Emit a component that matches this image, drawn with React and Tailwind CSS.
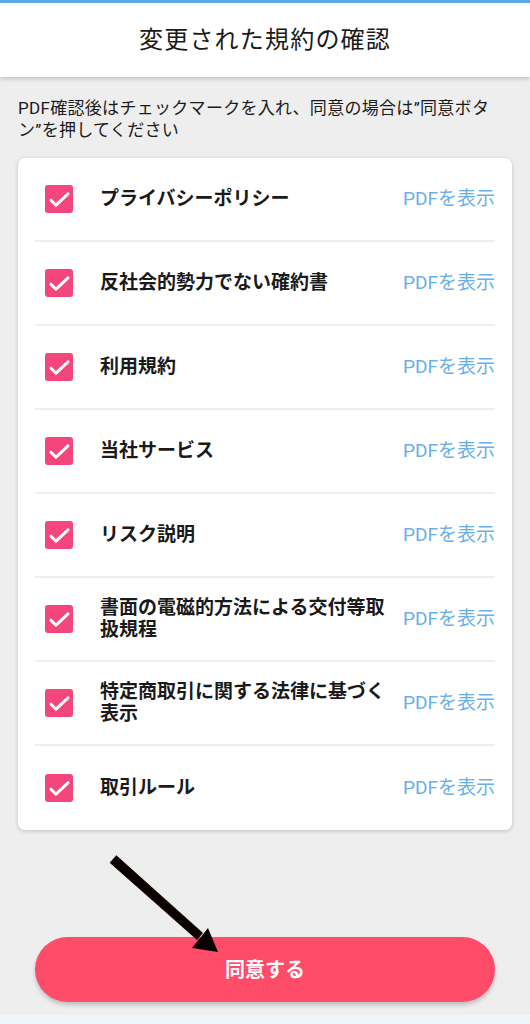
import React from 'react';

const terms = [
  'プライバシーポリシー',
  '反社会的勢力でない確約書',
  '利用規約',
  '当社サービス',
  'リスク説明',
  '書面の電磁的方法による交付等取扱規程',
  '特定商取引に関する法律に基づく表示',
  '取引ルール',
];

const font = { fontFamily: 'Roboto, "Noto Sans CJK JP", "Noto Sans", sans-serif' };

const CheckBox = () => (
  <div className="w-[28px] h-[28px] rounded-[3px] bg-[#f2467c] shrink-0">
    <svg width="28" height="28" viewBox="0 0 28 28" fill="none">
      <path d="M6 15.2 L11 20.2 L23 8.8" stroke="#ffffff" strokeWidth="3" strokeLinecap="round" strokeLinejoin="round" />
    </svg>
  </div>
);

const TermRow = ({ label, last }) => (
  <div className={`h-[84px] flex items-center ${last ? '' : 'border-b-2 border-[#efefef]'}`}>
    <div className="pl-[10px]">
      <CheckBox />
    </div>
    <div className="ml-[27px] w-[290px] text-[19px] leading-[22px] font-bold text-[#1a1a1a]">{label}</div>
    <div className="ml-auto text-[19px] text-[#6aafe8]">PDFを表示</div>
  </div>
);

export default function App() {
  return (
    <div className="relative w-[530px] h-[1024px] bg-[#eeeeee] flex flex-col overflow-hidden" style={font}>
      {/* header */}
      <header className="h-[77px] bg-white border-t-[3px] border-[#5aaae6] shadow-[0_2px_4px_rgba(0,0,0,0.18)] flex items-center justify-center z-10">
        <h1 className="text-[24px] text-[#1a1a1a] tracking-[1.2px]">変更された規約の確認</h1>
      </header>

      <main className="px-[18px] pt-[20px] flex-1 flex flex-col">
        <p className="text-[17px] leading-[22px] text-[#1a1a1a] tracking-[0.3px]">
          PDF確認後はチェックマークを入れ、同意の場合は”同意ボタン”を押してください
        </p>

        <div className="mt-[17px] bg-white rounded-[7px] shadow-[0_1px_4px_rgba(0,0,0,0.2)] px-[17px]">
          {terms.map((t, i) => (
            <TermRow key={i} label={t} last={i === terms.length - 1} />
          ))}
        </div>

        <div className="flex-1" />

        <button className="mx-[17px] mb-[13px] h-[65px] rounded-full bg-[#ff4d69] text-white text-[20px] font-bold shadow-[0_3px_4px_rgba(0,0,0,0.2)]">
          同意する
        </button>
      </main>

      <div className="h-[9px] bg-[#f1f5f9]" />

      {/* annotation arrow drawn over the page */}
      <svg className="absolute left-0 top-0 pointer-events-none" width="530" height="1024" viewBox="0 0 530 1024">
        <polygon points="116.3,855.3 109.7,862.7 197,940 203,933" fill="#0a0000" />
        <polygon points="218,952 192,948 208,928" fill="#0a0000" />
      </svg>
    </div>
  );
}
